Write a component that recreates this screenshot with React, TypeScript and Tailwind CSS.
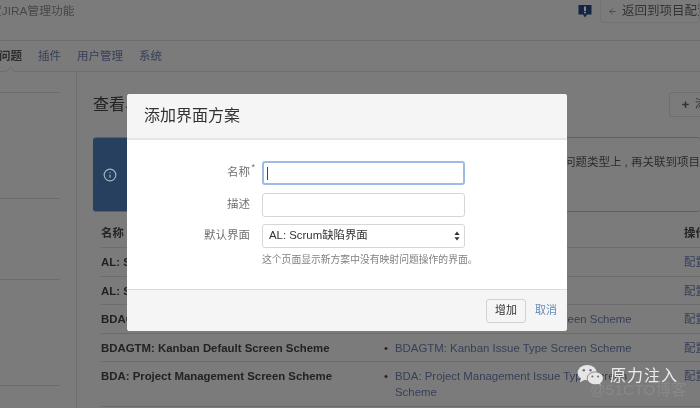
import { ArrowLeft, Info, Plus } from "lucide-react"

const FONT = "font-['Liberation_Sans','Noto_Sans_CJK_SC',sans-serif]"

const rows = [
  { name: "AL: Scrum Default Screen Scheme", issue: ["AL: Scrum Issue Type Scheme"] },
  { name: "AL: Scrum Bug Screen Scheme", issue: ["AL: Scrum Bug Type Scheme"] },
  { name: "BDAGTM: Scrum Default Screen Scheme", issue: ["BDAGTM: Kanban Issue Type Screen Scheme"] },
  { name: "BDAGTM: Kanban Default Screen Scheme", issue: ["BDAGTM: Kanban Issue Type Screen Scheme"] },
  { name: "BDA: Project Management Screen Scheme", issue: ["BDA: Project Management Issue Type Screen", "Scheme"] },
]

function WeChatMark() {
  return (
    <svg viewBox="0 0 28 22" className="w-[27px] h-[21px]" fill="#e6e6e6">
      <ellipse cx="10.500" cy="8" rx="10" ry="8" />
      <path d="M4 13l-1 5 6-3z" />
      <ellipse cx="19" cy="14" rx="8.500" ry="6.800" stroke="#6f6f6f" strokeWidth="0.800" />
      <path d="M24 18.500l1 3.500-4.500-2z" />
      <circle cx="7" cy="5.500" r="1.300" fill="#6f6f6f" />
      <circle cx="14" cy="5.500" r="1.300" fill="#6f6f6f" />
      <circle cx="16" cy="12" r="1.100" fill="#6f6f6f" />
      <circle cx="22" cy="12" r="1.100" fill="#6f6f6f" />
    </svg>
  )
}

function FormRow({ label, star, children }: { label: string; star?: boolean; children: React.ReactNode }) {
  return (
    <div className="flex items-center">
      <div className="w-[123px] text-right text-[11.500px] text-[#707070] relative">
        {label}
        {star && <span className="absolute right-[-5px] top-[-3px] text-[9px] text-[#707070]">*</span>}
      </div>
      <div className="ml-[12px]">{children}</div>
    </div>
  )
}

export default function App() {
  return (
    <div className={`${FONT} relative w-[700px] h-[408px] overflow-hidden bg-[#7b7b7b] blur-[0.5px]`}>
      {/* page behind the dialog */}
      <header className="h-[41px] flex items-start border-b border-[#6d6d6d]">
        <div className="ml-[-10px] text-[11.800px] leading-[22px] text-[#474747]">置JIRA管理功能</div>
        <div className="ml-auto flex items-start">
          <svg viewBox="0 0 14 14" className="w-[14px] h-[14px] mt-[4px] mr-[8px]">
            <path d="M0.500 1h13v9.500H9L7 13.500 5 10.500H0.500z" fill="#142544" />
            <rect x="6.200" y="2.500" width="1.600" height="4.500" fill="#a0a0a0" />
            <rect x="6.200" y="7.800" width="1.600" height="1.500" fill="#a0a0a0" />
          </svg>
          <div className="w-[100px] h-[24px] mt-[-1px] border border-[#727272] rounded-[3px] flex items-center pl-[7px] gap-[5px] text-[12.500px] text-[#333] whitespace-nowrap overflow-hidden">
            <ArrowLeft className="w-[9px] h-[9px] shrink-0 text-[#4a4a4a]" strokeWidth={2.500} />
            返回到项目配置
          </div>
        </div>
      </header>

      <nav className="relative h-[31px] flex items-center border-b border-[#6f6f6f] text-[11.500px] pt-[1px]">
        <span className="ml-[-1px] font-bold text-[#2b2b2b] w-[39px]">问题</span>
        <span className="text-[#363f58] w-[39px]">插件</span>
        <span className="text-[#363f58] w-[62px]">用户管理</span>
        <span className="text-[#363f58]">系统</span>
        <div className="absolute left-[7px] bottom-[-4px] w-[7px] h-[7px] rotate-45 bg-[#7b7b7b] border-l border-t border-[#6f6f6f]" />
      </nav>

      <div className="flex h-[336px]">
        <aside className="w-[77px] shrink-0 border-r border-[#6e6e6e] pt-[20px]">
          <div className="w-[60px] h-[106px] border-t border-[#6c6c6c]" />
          <div className="w-[60px] h-[81px] border-t border-[#6c6c6c]" />
          <div className="w-[60px] h-[106px] border-t border-[#6c6c6c]" />
          <div className="w-[60px] border-t border-[#6c6c6c]" />
        </aside>

        <main className="flex-1 min-w-0 pl-[16px]">
          <div className="h-[65px] flex items-start pt-[20px] justify-between">
            <h1 className="text-[16px] leading-[24px] text-[#222] mt-[1px]">查看界面方案</h1>
            <div className="w-[40px] h-[25px] mr-[-9px] border border-[#6e6e6e] rounded-[3px] flex items-center pl-[11px] gap-[5px] text-[11.500px] text-[#333] whitespace-nowrap overflow-hidden">
              <Plus className="w-[9px] h-[9px] shrink-0" strokeWidth={4} />
              添加界面方案
            </div>
          </div>

          <div className="h-[75px] flex border-y border-[#565f75] rounded-[3px] overflow-hidden">
            <div className="w-[40px] shrink-0 bg-[#27405f] flex items-center justify-center pr-[6px]">
              <Info className="w-[14px] h-[14px] text-[#a9b3c4]" />
            </div>
            <div className="flex-1 flex items-start justify-end pt-[16px] text-[11.500px] text-[#2c2c2c] whitespace-nowrap overflow-hidden">
              <span>问题类型上 , 再关联到项目</span>
            </div>
          </div>

          <div className="pl-[8px] text-[11.400px] mt-[8px]">
            <div className="h-[28px] flex items-center border-b border-[#6c6c6c] font-bold text-[#252525]">
              <div className="w-[283px] shrink-0">名称</div>
              <div className="w-[300px] shrink-0" />
              <div className="whitespace-nowrap">操作</div>
            </div>
            {rows.map((row, i) => (
              <div
                key={row.name}
                className={`flex items-start border-b border-[#6c6c6c] pt-[6px] leading-[16px] ${i === 4 ? "h-[45px]" : "h-[28.500px]"}`}
              >
                <div className="w-[283px] shrink-0 font-bold text-[#222] whitespace-nowrap">{row.name}</div>
                <div className="w-[300px] shrink-0 flex text-[#363f58]">
                  <span className="w-[11px] text-[#222]">•</span>
                  <div className="whitespace-nowrap">
                    {row.issue.map((line) => (
                      <div key={line}>{line}</div>
                    ))}
                  </div>
                </div>
                <div className="text-[#363f58] whitespace-nowrap">配置</div>
              </div>
            ))}
          </div>
        </main>
      </div>

      {/* dialog */}
      <div className="absolute left-[127px] top-[94px] w-[440px] h-[237px] rounded-[3px] overflow-hidden flex flex-col bg-white">
        <div className="h-[46px] shrink-0 bg-[#f5f5f5] border-b-2 border-[#e6e6e6] flex items-center pl-[17px] text-[16px] text-[#333]">
          添加界面方案
        </div>
        <div className="h-[150px] shrink-0 pt-[21px] flex flex-col gap-[7.500px] border-b border-[#dcdcdc]">
          <FormRow label="名称" star>
            <div className="w-[203px] h-[24px] border-2 border-[#9dbbe6] rounded-[3px] flex items-center pl-[3px]">
              <div className="w-px h-[13px] bg-[#444]" />
            </div>
          </FormRow>
          <FormRow label="描述">
            <div className="w-[203px] h-[24px] border border-[#d6d6d6] rounded-[3px]" />
          </FormRow>
          <FormRow label="默认界面">
            <div className="w-[203px] h-[24px] border border-[#d6d6d6] rounded-[3px] flex items-center pl-[6px] pr-[4px] text-[11.400px] text-[#333]">
              AL: Scrum缺陷界面
              <svg viewBox="0 0 8 12" className="ml-auto w-[6px] h-[10px]" fill="#333">
                <path d="M4 0l3.500 4.500h-7zM4 12L.500 7.500h7z" />
              </svg>
            </div>
          </FormRow>
          <div className="ml-[135px] mt-[-3px] text-[9.800px] leading-[14px] text-[#808080] whitespace-nowrap">
            这个页面显示新方案中没有映射问题操作的界面。
          </div>
        </div>
        <div className="flex-1 bg-[#f5f5f5] flex items-center justify-end pr-[10px] gap-[9px]">
          <div className="w-[40px] h-[24px] border border-[#d2d2d2] rounded-[3px] flex items-center justify-center text-[11px] text-[#333]">
            增加
          </div>
          <span className="text-[11px] text-[#5f8bbb]">取消</span>
        </div>
      </div>

      {/* watermark */}
      <div className="absolute left-[577px] top-[365px] flex items-center">
        <WeChatMark />
        <span className="ml-[6px] text-[16px] leading-[21px] text-[#ececec] tracking-[1px]">原力注入</span>
      </div>
      <div className="absolute left-[590px] top-[378px] text-[15.500px] leading-[24px] text-[#888888] whitespace-nowrap">@51CTO博客</div>
    </div>
  )
}
